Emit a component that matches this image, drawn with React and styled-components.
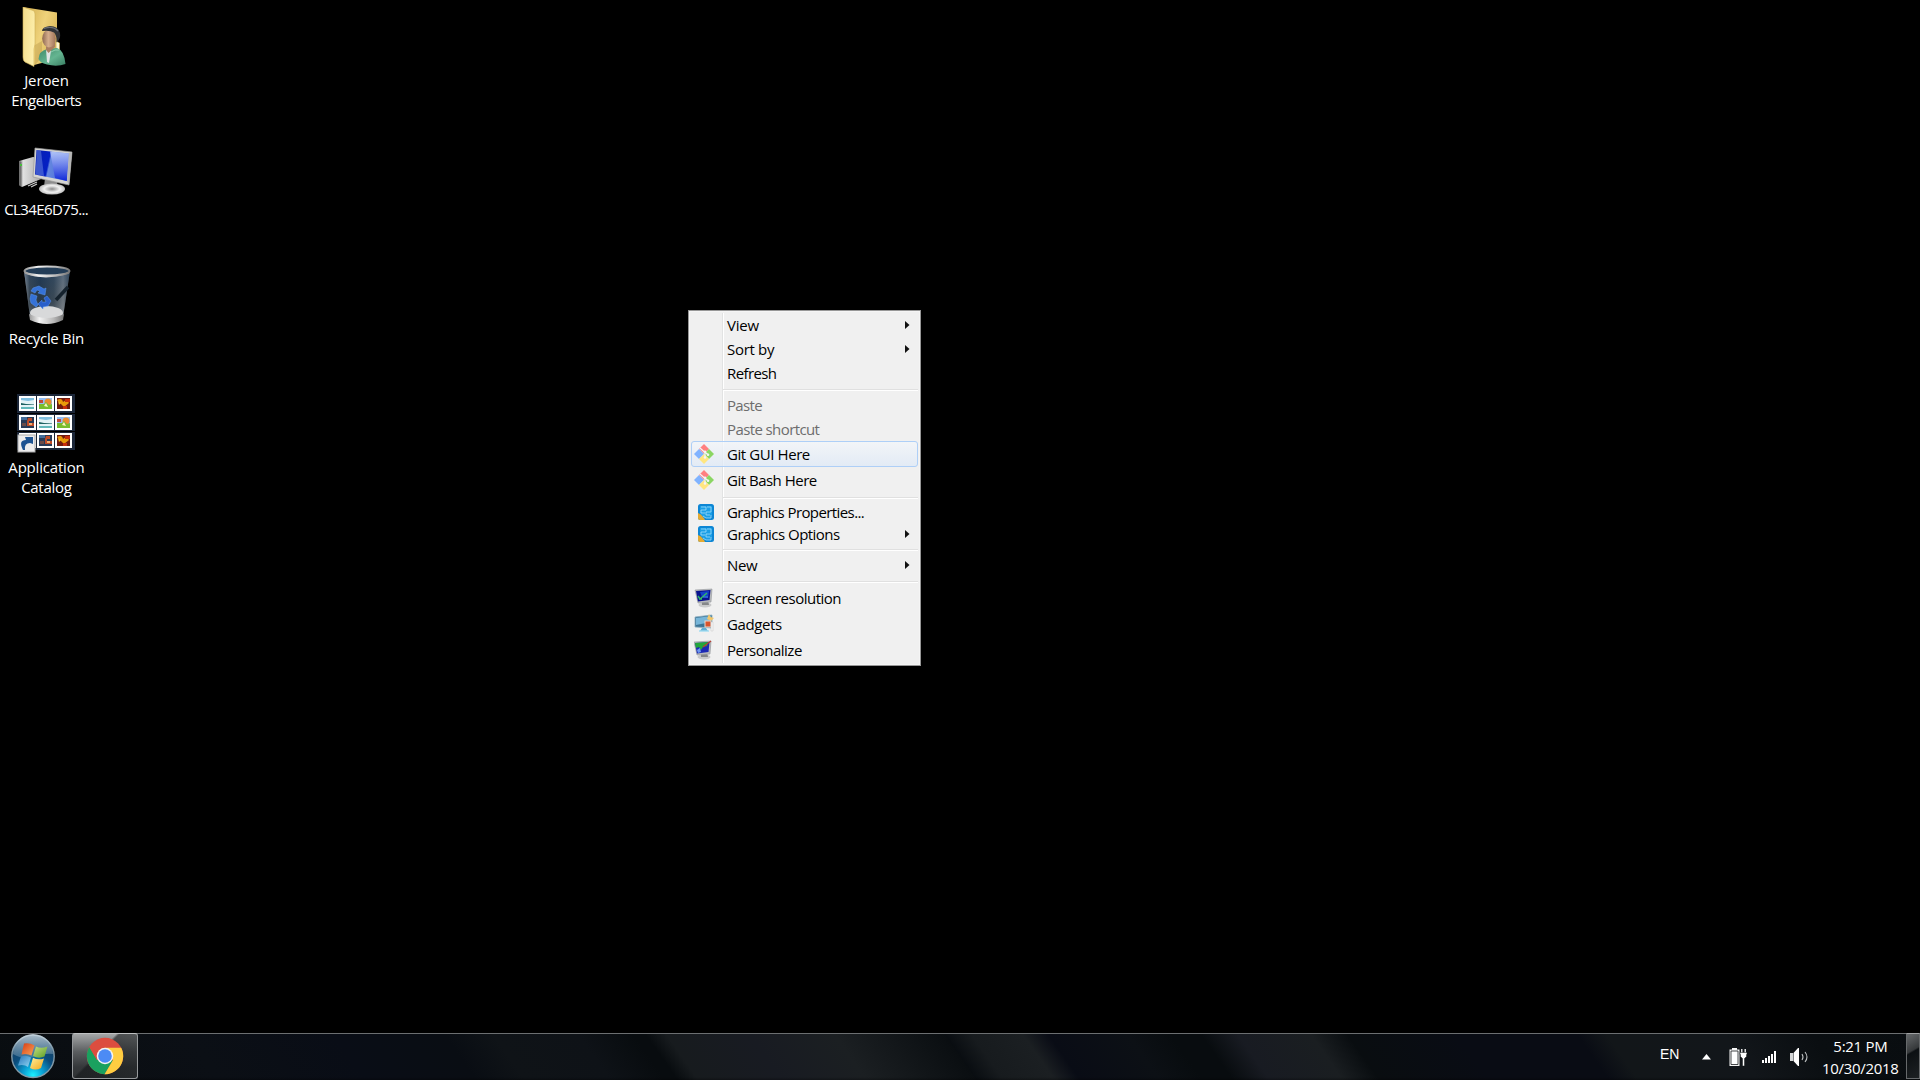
import React from 'react';
import styled, { createGlobalStyle } from 'styled-components';

const Global = createGlobalStyle`
  * { box-sizing: border-box; }
  html, body { margin: 0; padding: 0; background: #000; overflow: hidden; }
  svg { display: block; }
`;

const Screen = styled.main`
  position: relative;
  display: flex;
  flex-direction: column;
  width: 1920px;
  height: 1080px;
  background: #000;
  font-family: "Open Sans", "Noto Sans", sans-serif;
  font-size: 15px;
  color: #fff;
  white-space: nowrap;
`;

const Desktop = styled.section`
  flex: 1;
  display: flex;
  flex-direction: column;
  padding-top: 7px;
`;

const Shortcut = styled.div`
  display: flex;
  flex-direction: column;
  align-items: center;
  width: 93px;
  height: 129px;
`;

const ShortcutLabel = styled.div`
  display: flex;
  flex-direction: column;
  align-items: center;
  margin-top: 3px;
  line-height: 20px;
  font-size: 15px;
`;

const Text = styled.span`
  letter-spacing: ${(p) => p.$track || 0}px;
  margin-right: ${(p) => -(p.$track || 0)}px;
`;

const Menu = styled.nav`
  position: absolute;
  left: 688px;
  top: 310px;
  width: 233px;
  height: 356px;
  padding: 2px;
  border: 1px solid #979797;
  color: #000;
  background: linear-gradient(90deg, transparent 33px, #e2e3e3 33px, #e2e3e3 34px, #fff 34px, #fff 35px, transparent 35px) 0 2px / 100% 350px no-repeat, #f0f0f0;
  box-shadow: inset 0 0 0 1px #f5f5f5;
`;

const MenuRow = styled.div`
  display: flex;
  align-items: center;
  height: ${(p) => p.$h}px;
  padding-right: 7px;
  border: 1px solid ${(p) => (p.$active ? '#aecff7' : 'transparent')};
  border-radius: 3px;
  background: ${(p) => (p.$active ? 'linear-gradient(rgba(243,246,250,.75), rgba(222,233,247,.75))' : 'none')};
  color: ${(p) => (p.$disabled ? '#6d6d6d' : '#000')};
`;

const MenuIcon = styled.span`
  display: flex;
  justify-content: flex-end;
  width: 22px;
  margin-right: 13px;
`;

const MenuText = styled.span`
  flex: 1;
  line-height: 20px;
  padding-bottom: 1px;
`;

const Separator = styled.div`
  height: 8px;
  margin-left: 32px;
  padding-top: 4px;
  &::before {
    content: '';
    display: block;
    height: 2px;
    background: linear-gradient(#e0e0e0 50%, #fff 50%);
  }
`;

const Taskbar = styled.footer`
  display: flex;
  height: 47px;
  border-top: 1px solid #6c6f71;
  background:
    linear-gradient(transparent 43px, rgba(0, 0, 0, .3) 46px),
    linear-gradient(55deg,
      #090d10 0px, #0b0f15 180px, #090d16 300px, #090d13 390px, #0f1317 430px, #0e1217 500px,
      #080c0f 545px, #080c0f 555px, #171b1e 572px, #181b22 640px, #1b1f22 710px, #0a0e11 800px,
      #090d11 800px, #171b1e 822px, #1b1f22 864px, #090c15 885px, #0c1015 950px, #080c0f 985px,
      #080c0f 1010px, #181b22 1040px, #1a1e21 1100px, #090d10 1130px, #090c14 1220px, #090c14 1318px,
      #121619 1342px, #12161a 1440px, #0a0e11 1510px, #090d10 1600px);
`;

const StartButton = styled.button`
  width: 72px;
  height: 46px;
  padding: 0 0 0 11px;
  border: 0;
  background: none;
`;

const TaskButton = styled.button`
  display: flex;
  align-items: center;
  justify-content: center;
  width: 66px;
  height: 46px;
  margin-top: -1px;
  padding: 0;
  border: 1px solid #96999b;
  border-top-color: #bfc1c2;
  border-radius: 3px;
  background:
    linear-gradient(135deg, transparent 40%, rgba(20, 23, 25, .6) 43%, rgba(28, 31, 33, .5) 100%),
    linear-gradient(#a4a6a7, #5b5e60 40%, #35383a 75%, #303335);
`;

const Tray = styled.div`
  display: flex;
  align-items: center;
  margin-left: auto;
  height: 46px;
`;

const Language = styled.span`
  width: 42px;
  font: 14px/20px "Liberation Sans", Arial, sans-serif;
  padding-bottom: 6px;
`;

const TrayIcon = styled.span`
  width: ${(p) => p.$w}px;
`;

const Clock = styled.div`
  display: flex;
  flex-direction: column;
  align-items: center;
  width: 91px;
  line-height: 22px;
  padding-bottom: 1px;
`;

const ShowDesktop = styled.button`
  width: 14px;
  height: 46px;
  padding: 0;
  border: 1px solid #66696b;
  border-top-color: #a0a2a3;
  margin-top: -2px;
  margin-left: 0;
  background: linear-gradient(150deg, #66696b 0, #36393b 38%, #0c1013 42%, #1d2123 100%);
`;

function UserFolder() {
  return (
    <svg width="60" height="60" viewBox="0 0 60 60">
      <defs>
        <linearGradient id="ff" x1="0" x2="1" y2=".4"><stop stopColor="#f3dc8b" /><stop offset="1" stopColor="#fdeeab" /></linearGradient>
        <linearGradient id="fb" x1="0" x2="1" y2=".5"><stop stopColor="#cfab4b" /><stop offset=".6" stopColor="#efd27a" /><stop offset="1" stopColor="#dcb95c" /></linearGradient>
        <linearGradient id="skin" x1="0" x2="1"><stop stopColor="#8e6950" /><stop offset=".45" stopColor="#d5ad8c" /><stop offset="1" stopColor="#9f7459" /></linearGradient>
        <linearGradient id="shirt" x1="0" x2="1" y2="1"><stop stopColor="#3c8868" /><stop offset=".55" stopColor="#65b591" /><stop offset="1" stopColor="#397e62" /></linearGradient>
      </defs>
      <path d="M6 0L40 5.5V52L17 58L8 55Z" fill="url(#fb)" />
      <path d="M39 34L42.5 36V47H39Z" fill="#fff6d2" stroke="#bba252" strokeWidth=".7" />
      <path d="M6 0L16 3.5Q18 4 18 7V37L17 42V59.5L8 55Q6 54 6 50Z" fill="url(#ff)" stroke="#cfae55" strokeWidth=".6" />
      <path d="M18 38L25 34V50L18 58Z" fill="#a18035" opacity=".3" />
      <path d="M21.5 52Q22 44 30 42L40 41Q47 43 48.5 57Q40 60 30 57.5Q23 56 21.5 52Z" fill="url(#shirt)" />
      <path d="M29 42L33 41L34 44L32 56L30 55Z" fill="#dfe4e4" />
      <path d="M29 37V43L31.5 46L38 40V34Z" fill="#a97e61" />
      <ellipse cx="32" cy="31.5" rx="6.8" ry="9" fill="url(#skin)" />
      <path d="M25 24Q25 20 33 19Q41 19 43 26Q44 32 39.5 35.5Q40 29 37 25.5Q33 23 25 24Z" fill="#303236" />
      <path d="M27 21.5Q36 18.5 41 24" stroke="#6b6f76" strokeWidth="1.2" fill="none" />
      <path d="M34 45Q38 42 42 43" stroke="#91cfb0" strokeWidth="1" fill="none" />
    </svg>
  );
}

function Computer() {
  return (
    <svg width="60" height="60" viewBox="0 -6 60 60">
      <defs>
        <linearGradient id="scr" x1="0" x2="1" y2=".2"><stop stopColor="#0a1fae" /><stop offset=".45" stopColor="#0420c4" /><stop offset=".5" stopColor="#6386df" /><stop offset="1" stopColor="#4b6cd8" /></linearGradient>
        <linearGradient id="scrv" y2="1" x2="0"><stop stopColor="#c9d8ff" stopOpacity=".75" /><stop offset="1" stopColor="#0a22d8" stopOpacity=".95" /></linearGradient>
        <linearGradient id="tower" x1="0" x2="1"><stop stopColor="#777" /><stop offset=".2" stopColor="#e0e0e0" /><stop offset="1" stopColor="#aaa" /></linearGradient>
        <radialGradient id="base"><stop stopColor="#8c8c8c" /><stop offset=".6" stopColor="#f2f2f2" /><stop offset="1" stopColor="#bdbdbd" /></radialGradient>
      </defs>
      <path d="M2 19L16 15L24 16V37L5 45L2 43Z" fill="url(#tower)" />
      <path d="M2 19L4.5 20V45L2 43Z" fill="#707070" /><path d="M3 23H5" stroke="#44bf38" strokeWidth="2" />
      <path d="M11 44L20 40M14 45L20 42" stroke="#ccc" strokeWidth="1.2" />
      <path d="M28 36H39L41 45H27Z" fill="#8d8d8d" />
      <ellipse cx="35" cy="47" rx="13" ry="5.5" fill="url(#base)" />
      <path d="M18 6L55 10L52 43L16 35Z" fill="#d5d5d3" stroke="#999" strokeWidth=".7" />
      <path d="M19.5 8L52 11.5L49.8 39L18 32.5Z" fill="url(#scr)" />
      <path d="M33 9.5L52 11.5L49.8 39L38 36Z" fill="url(#scrv)" />
      <path d="M20 8L24 9L27 34L18.5 32.5Z" fill="#86a8ed" opacity=".4" />
      <path d="M55 10L52 43L50 39L52 11Z" fill="#b6b6b5" />
    </svg>
  );
}

function RecycleBin() {
  return (
    <svg width="60" height="60" viewBox="1 1 60 60">
      <defs>
        <linearGradient id="bin" x1="0" x2="1"><stop stopColor="#b5bbc1" /><stop offset=".12" stopColor="#3b4956" /><stop offset=".35" stopColor="#1d3349" /><stop offset=".65" stopColor="#3c4d5c" /><stop offset=".85" stopColor="#8a9299" /><stop offset="1" stopColor="#344452" /></linearGradient>
        <linearGradient id="binv" x2="0" y2="1"><stop stopColor="#234263" stopOpacity=".5" /><stop offset=".6" stopColor="#39424a" stopOpacity=".35" /><stop offset="1" stopColor="#999" stopOpacity=".5" /></linearGradient>
        <linearGradient id="rim" x1="0" x2="1"><stop stopColor="#999" /><stop offset=".3" stopColor="#f3f3f3" /><stop offset=".7" stopColor="#b9b9b9" /><stop offset="1" stopColor="#777" /></linearGradient>
      </defs>
      <path d="M8 7L14 53Q31 61 47 53L54 7Z" fill="url(#bin)" />
      <path d="M8 7L14 53Q31 61 47 53L54 7Z" fill="url(#binv)" />
      <ellipse cx="30.5" cy="49" rx="16.5" ry="7" fill="#d8d9da" />
      <path d="M13 50Q31 58 48 50L47 56Q31 64 14 56Z" fill="url(#rim)" />
      <path d="M52 23L40 36" stroke="#15222d" strokeWidth="3.5" />
      <ellipse cx="31" cy="7" rx="22.5" ry="4.5" fill="#233d57" stroke="url(#rim)" strokeWidth="2" />
      <path d="M9 9Q29 16 53 9" fill="none" stroke="url(#rim)" strokeWidth="1.8" />
      <g fill="#3572d7" stroke="#5b96ee" strokeWidth=".5">
        <path d="M17 24L23 22L28 25L30 24L29 31L22 29L24 27L21 26L19 29L15 27Z" />
        <path d="M15 30L21 32L20 36L22 41L20 43L15 39L14 35Z" />
        <path d="M31 32L35 37L32 42L27 43V45L22 40L26 36V38L30 38L28 34Z" fill="#295fca" />
      </g>
    </svg>
  );
}

function Thumb({ x, y, kind }) {
  return (
    <g transform={`translate(${x} ${y})`}>
      <rect width="17" height="15" fill="#fff" />
      {kind === 'lake' && <g><path d="M2 2H15V13H2Z" fill="#e3f3f5" /><path d="M2 2H15V4L9 5L2 4Z" fill="#7fbfe0" /><path d="M2 7L7 8L15 8.5V9H2Z" fill="#1d6160" /><path d="M2 11H15V13H2Z" fill="#62b8ba" /></g>}
      {kind === 'field' && <g><path d="M2 2H15V13H2Z" fill="#94bdf3" /><path d="M2 4H6V7H2Z" fill="#c34c3c" /><circle cx="11" cy="6" r="3.5" fill="#e98d31" /><path d="M2 8H7L9 6L12 9L15 8V13H2Z" fill="#78bd2e" /><path d="M7 10L9 7L11 11Z" fill="#fff4bf" /></g>}
      {kind === 'leaf' && <g><path d="M2 2H15V13H2Z" fill="#711b0f" /><path d="M2 4Q7 1 8 6Q12 2 14 7L9 11Z" fill="#e89a0b" /><path d="M3 5L6 7L4 9Z" fill="#fac51c" /><path d="M10 3H15V6H10ZM8 10H12V13H8Z" fill="#c52d0c" /></g>}
      {kind === 'dusk' && <g><path d="M2 2H15V13H2Z" fill="#273a57" /><path d="M2 2H8V5H2Z" fill="#426c9b" /><path d="M9 3H13V6H10V8H15V11H8V6Z" fill="#bd4c29" /><path d="M3 8H7V11H3Z" fill="#694a48" /><path d="M10 8H13V10H10Z" fill="#edaa6f" /></g>}
    </g>
  );
}

function Catalog() {
  const kinds = ['lake', 'field', 'leaf', 'dusk', 'lake', 'field', 'lake', 'dusk', 'leaf'];
  return (
    <svg width="60" height="60" viewBox="1 1 60 60">
      <path d="M1 1H59V20H1ZM1 21H59V38H1ZM1 39H59V57H1Z" fill="#1b2638" />
      {kinds.map((kind, i) => <Thumb key={i} kind={kind} x={3 + (i % 3) * 18} y={[3, 22, 40][Math.floor(i / 3)]} />)}
      <rect x="2" y="42" width="17" height="17" fill="#ececed" stroke="#aaa" />
      <path d="M7 57Q2 47 10 47L9 44H17V51L14 50Q8 50 9 57Z" fill="#1c5291" />
    </svg>
  );
}

function GitIcon() {
  return (
    <svg width="20" height="20" viewBox="0 0 20 20">
      <path d="M10 0L15 5L10 10L5 5Z" fill="#ff8080" />
      <path d="M15 5L20 10L15 15L10 10Z" fill="#8bd663" />
      <path d="M5 5L10 10L5 15L0 10Z" fill="#80b3ff" />
      <path d="M10 10L15 15L10 20L5 15Z" fill="#ffe680" />
      <path d="M6 4L11 8.5V14M11 8L14 10.7" fill="none" stroke="#f3f4f6" strokeWidth="1.2" />
      <circle cx="11" cy="7.8" r="1.3" fill="#f3f4f6" /><circle cx="14" cy="10.7" r="1.3" fill="#f3f4f6" /><circle cx="11" cy="13.5" r="1.3" fill="#f3f4f6" />
    </svg>
  );
}

function GraphicsIcon() {
  return (
    <svg width="16" height="16" viewBox="0 0 16 16">
      <rect width="16" height="16" rx="2.5" fill="#0d86d4" />
      <path d="M0 9Q5 11 7 16H2Q0 16 0 14Z" fill="#e4aa32" />
      <path d="M2 2H14V11L12 14H6L2 9Z" fill="#1b9fe6" />
      <path d="M3 3H8V6H3V9H7M9 3H13V8H8V11H12M5 12L8 14H13V11" fill="none" stroke="#a1ddfb" strokeWidth=".8" />
    </svg>
  );
}

function MonitorIcon({ kind }) {
  if (kind === 'gadgets') {
    return (
      <svg width="20" height="20" viewBox="0 0 20 20">
        <path d="M1 3L18 1V14L1 13Z" fill="#3c7496" stroke="#8cadbf" strokeWidth=".8" />
        <path d="M2 4L17 2V8L2 11Z" fill="#77b5d8" />
        <path d="M8 14H12L14 17H6Z" fill="#62b0d5" /><path d="M5 17H15" stroke="#a0dcf1" strokeWidth="1.4" />
        <path d="M15 0L16.5 3L20 4L17 7L13 5Z" fill="#f2c66b" />
        <rect x="11" y="7" width="6" height="6" fill="#d9542d" stroke="#e8d9cf" /><path d="M17 8H19V17H17Z" fill="#f5f5f5" stroke="#bbb" strokeWidth=".4" />
      </svg>
    );
  }
  const paint = kind === 'personalize';
  return (
    <svg width="20" height="20" viewBox={paint ? '1 0 20 20' : '0 0 20 20'}>
      <ellipse cx="11" cy="17" rx="6.5" ry="2.5" fill="#c9cacb" />
      <path d="M8 12H14L15 17H8Z" fill="#858789" />
      <path d="M1 2L18 1L17 14L4 15Z" fill="#b8babc" stroke="#92969b" strokeWidth=".6" />
      <path d="M2 3L16.5 2L15.5 12L4 13.5Z" fill={paint ? '#1c29b5' : '#08128e'} />
      {paint ? (
        <g><path d="M2 3L15 2L14 6L10 7L8 10L6 7L3 8Z" fill="#23a63a" /><path d="M10 7L18 1" stroke="#ba3d32" strokeWidth="1.2" /><path d="M4 10L7 8L8 12L5 13Z" fill="#6f9aef" /></g>
      ) : (
        <g><path d="M6 4L15 3L14 10L8 9Z" fill="#1541ca" /><path d="M4 8L6 11L13 5M5 11H8" fill="none" stroke="#32ba65" strokeWidth="1.5" /><path d="M9 9H14" stroke="#458be8" /></g>
      )}
    </svg>
  );
}

function Arrow() {
  return <svg width="5" height="8" viewBox="0 0 5 8"><path d="M0 0L4.5 4L0 8Z" fill="#111" /></svg>;
}

function StartOrb() {
  return (
    <svg width="45" height="46" viewBox="0 0 45 46">
      <defs>
        <radialGradient id="orb" cx=".5" cy=".95" r=".85"><stop stopColor="#1bf0ff" /><stop offset=".28" stopColor="#0aa0d4" /><stop offset=".6" stopColor="#0b4c7c" /><stop offset="1" stopColor="#173f60" /></radialGradient>
        <linearGradient id="shine" x2="0" y2="1"><stop stopColor="#d4e1e9" stopOpacity=".8" /><stop offset="1" stopColor="#88aabf" stopOpacity=".35" /></linearGradient>
        <linearGradient id="wr" x2="1" y2="1"><stop stopColor="#d73c12" /><stop offset="1" stopColor="#f9a55b" /></linearGradient>
        <linearGradient id="wg" x2="1" y2="1"><stop stopColor="#c4de82" /><stop offset="1" stopColor="#5b9e24" /></linearGradient>
        <linearGradient id="wb" x2="1" y2="1"><stop stopColor="#2876bd" /><stop offset="1" stopColor="#91d7f2" /></linearGradient>
        <linearGradient id="wy" x2="1" y2="1"><stop stopColor="#fff09d" /><stop offset="1" stopColor="#f3a718" /></linearGradient>
      </defs>
      <circle cx="22" cy="22.3" r="21.2" fill="url(#orb)" stroke="#829aa8" strokeWidth="1.4" />
      <path d="M2 20A20 20 0 0 1 42 20Q32 19 22 23Q12 26 2 20Z" fill="url(#shine)" />
      <path d="M13 9.5Q19 8.5 23.5 11.5L20.5 21.5Q15.5 19 10.5 20.5Z" fill="url(#wr)" />
      <path d="M25 12.5Q30 15 36.5 12.5L33.5 22.5Q27.5 25 22 22Z" fill="url(#wg)" />
      <path d="M10 22.5Q15 20.5 20 23.5L17 33Q13 30 7 31.5Z" fill="url(#wb)" />
      <path d="M22 23.8Q27 26.5 33 24.5L30 34Q24.5 37 19 34Z" fill="url(#wy)" />
    </svg>
  );
}

function ChromeIcon() {
  return (
    <svg width="38" height="38" viewBox="0 0 38 38">
      <circle cx="19" cy="19" r="18.2" fill="#dc4d3f" />
      <path d="M3.3 9.9A18.2 18.2 0 0 0 18.6 37.2L27 23.5L19 19L11 23Z" fill="#1aa15f" />
      <path d="M19 10.7H35.2A18.2 18.2 0 0 1 18.6 37.2L27 23Z" fill="#ffcd41" />
      <path d="M3.3 9.9L11 23L12 15Z" fill="#dc4d3f" />
      <circle cx="19" cy="19" r="8.3" fill="#f4f4f4" /><circle cx="19" cy="19" r="6.8" fill="#4c8bf5" />
    </svg>
  );
}

function Battery() {
  return (
    <svg width="20" height="20" viewBox="0 0 20 20">
      <path d="M0.5 2.5H3V1H8V2.5H10.5V19H.5Z" fill="#f5f5f5" />
      <path d="M2 4H9V17.5H2Z" fill="#fff" stroke="#1a1d20" strokeWidth=".8" />
      <path d="M12.8 2V6M16.2 2V6" stroke="#fff" strokeWidth="1.3" />
      <path d="M11 5.5H18V7.5H17.5V9.5L15.5 11.5V19H13.5V11.5L11.5 9.5V7.5H11Z" fill="#fff" stroke="#14181b" strokeWidth=".5" />
    </svg>
  );
}

function Signal() {
  return <svg width="15" height="20" viewBox="0 0 15 20"><path d="M0 13H2V16H0ZM3 11H5V16H3ZM6 9H8V16H6ZM9 7H11V16H9ZM12 4H14V16H12Z" fill="#fff" /></svg>;
}

function Speaker() {
  return (
    <svg width="20" height="20" viewBox="0 0 20 20">
      <path d="M0 6H3V14H0Z" fill="#d5d7d8" /><path d="M3.5 6L8 1H9V19H8L3.5 14Z" fill="#fff" />
      <path d="M12 7Q14 10 12 13M15 5Q19 10 15 15" fill="none" stroke="#bfc2c3" strokeWidth="1.1" />
    </svg>
  );
}

const shortcuts = [
  { icon: <UserFolder />, lines: [['Jeroen', -0.1], ['Engelberts', -0.4]] },
  { icon: <Computer />, lines: [['CL34E6D75...', -0.6]] },
  { icon: <RecycleBin />, lines: [['Recycle Bin', -0.3]] },
  { icon: <Catalog />, lines: [['Application', -0.2], ['Catalog', -0.3]] },
];

const menu = [
  { text: 'View', h: 24, sub: true, track: -0.2 },
  { text: 'Sort by', h: 24, sub: true, track: -0.3 },
  { text: 'Refresh', h: 24, track: -0.6 },
  null,
  { text: 'Paste', h: 24, disabled: true, track: -0.65 },
  { text: 'Paste shortcut', h: 24, disabled: true, track: -0.6 },
  { text: 'Git GUI Here', h: 26, active: true, icon: <GitIcon />, track: -0.42 },
  { text: 'Git Bash Here', h: 26, icon: <GitIcon />, track: -0.5 },
  null,
  { text: 'Graphics Properties...', h: 22, icon: <GraphicsIcon />, track: -0.59 },
  { text: 'Graphics Options', h: 22, sub: true, icon: <GraphicsIcon />, track: -0.53 },
  null,
  { text: 'New', h: 24, sub: true, track: -0.35 },
  null,
  { text: 'Screen resolution', h: 26, icon: <MonitorIcon />, track: -0.5 },
  { text: 'Gadgets', h: 26, icon: <MonitorIcon kind="gadgets" />, track: -0.38 },
  { text: 'Personalize', h: 26, icon: <MonitorIcon kind="personalize" />, track: -0.5 },
];

export default function App() {
  return (
    <Screen>
      <Global />
      <Desktop>
        {shortcuts.map((s) => (
          <Shortcut key={s.lines[0][0]}>
            {s.icon}
            <ShortcutLabel>{s.lines.map(([t, k]) => <Text key={t} $track={k}>{t}</Text>)}</ShortcutLabel>
          </Shortcut>
        ))}
      </Desktop>
      <Menu>
        {menu.map((m, i) => (m ? (
          <MenuRow key={i} $h={m.h} $active={m.active} $disabled={m.disabled}>
            <MenuIcon>{m.icon}</MenuIcon>
            <MenuText><Text $track={m.track}>{m.text}</Text></MenuText>
            {m.sub && <Arrow />}
          </MenuRow>
        ) : <Separator key={i} />))}
      </Menu>
      <Taskbar>
        <StartButton aria-label="Start"><StartOrb /></StartButton>
        <TaskButton aria-label="Chrome"><ChromeIcon /></TaskButton>
        <Tray>
          <Language>EN</Language>
          <TrayIcon $w={27}><svg width="9" height="6" viewBox="0 0 9 6"><path d="M0 5.5L4.5 0L9 5.5Z" fill="#fff" /></svg></TrayIcon>
          <TrayIcon $w={33}><Battery /></TrayIcon>
          <TrayIcon $w={28}><Signal /></TrayIcon>
          <TrayIcon $w={25}><Speaker /></TrayIcon>
          <Clock><Text $track={-0.3}>5:21 PM</Text><Text $track={-0.3}>10/30/2018</Text></Clock>
          <ShowDesktop aria-label="Show desktop" />
        </Tray>
      </Taskbar>
    </Screen>
  );
}
